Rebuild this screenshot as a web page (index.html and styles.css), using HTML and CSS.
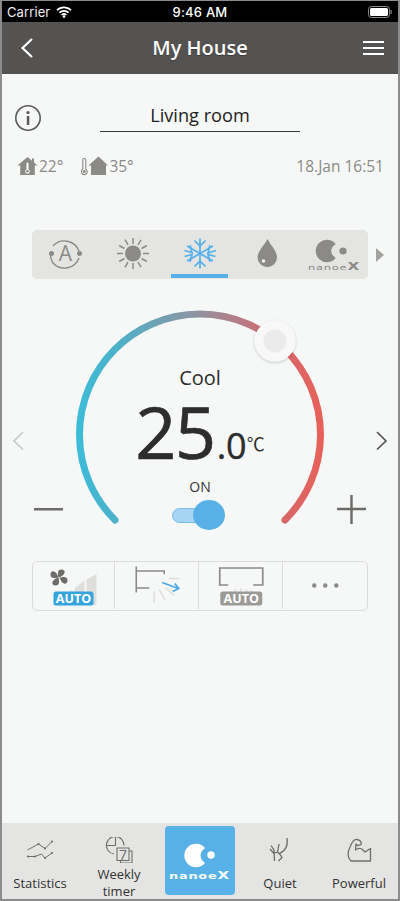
FILE: index.html
```html
<!DOCTYPE html>
<html lang="en">
<head>
<meta charset="utf-8">
<title>My House</title>
<link rel="stylesheet" href="styles.css">
</head>
<body>
<div class="frame">
  <div class="status">
    <div class="status-left">
      <span>Carrier</span>
      <svg class="wifi" viewBox="0 0 16 12" width="16" height="12"><path d="M1 4.2a10 10 0 0 1 14 0M3.4 6.7a6.6 6.6 0 0 1 9.2 0M5.7 9a3.3 3.3 0 0 1 4.6 0" fill="none" stroke="#fff" stroke-width="1.7"/><circle cx="8" cy="10.6" r="1.3" fill="#fff"/></svg>
    </div>
    <span class="clock">9:46 AM</span>
    <svg class="battery" viewBox="0 0 24 12" width="24" height="12"><rect x=".5" y=".5" width="21" height="11" rx="3" fill="none" stroke="#888"/><rect x="2" y="2" width="18" height="8" rx="1.5" fill="#fff"/><rect x="22.5" y="4" width="1.2" height="4" fill="#888"/></svg>
  </div>
  <header class="topbar">
    <svg class="back" viewBox="0 0 14 22" width="14" height="22"><path d="M12 2 2.5 11 12 20" fill="none" stroke="#fff" stroke-width="2.2"/></svg>
    <h1>My House</h1>
    <div class="burger"><i></i><i></i><i></i></div>
  </header>
  <main class="content">
    <div class="room-row">
      <svg class="info" viewBox="0 0 28 28" width="28" height="28"><circle cx="14" cy="14" r="12.2" fill="none" stroke="#5a5a58" stroke-width="1.6"/><circle cx="14" cy="8.6" r="1.6" fill="#5a5a58"/><rect x="12.8" y="12" width="2.5" height="9" fill="#5a5a58"/></svg>
      <div class="room-name">Living room</div>
    </div>
    <div class="meta">
      <div class="temps">
        <svg viewBox="0 0 21 20" width="21" height="20"><path d="M10.5 1 0.5 9.5h2.700V19h14.600V9.500h2.700L17 6.500V2.500h-2V4.800z" fill="#8b8a86"/><path d="M9.500 7.500a1 1 0 0 1 2 0v5.800a2.300 2.300 0 1 1-2 0z" fill="#fff"/><circle cx="10.500" cy="15.300" r="1.300" fill="#8b8a86"/></svg>
        <span class="t1">22°</span>
        <svg viewBox="0 0 27 20" width="27" height="20"><path d="M1.800 4a1.500 1.500 0 0 1 3 0v9.200a2.900 2.900 0 1 1-3 0z" fill="#f6f8f7" stroke="#8b8a86" stroke-width="1.100"/><circle cx="3.300" cy="15.600" r="1.500" fill="#8b8a86"/><path d="M17.500 0.500 7.500 9.500h2.500V19h15V9.500h2z" fill="#8b8a86"/></svg>
        <span>35°</span>
      </div>
      <span class="date">18.Jan 16:51</span>
    </div>
    <div class="modes-row">
      <nav class="modes">
        <svg viewBox="32 230 336 49" width="336" height="49">
          <g fill="none" stroke="#8b8a86" stroke-width="1.400">
            <path d="M53 246a15.500 15.500 0 0 1 26 5M79 258a15.500 15.500 0 0 1-26 5 16 16 0 0 1-2.500-9"/>
          </g>
          <circle cx="51.500" cy="253.500" r="2.500" fill="#8b8a86"/><circle cx="79.500" cy="253.500" r="2.500" fill="#8b8a86"/>
          <text x="65.500" y="261" text-anchor="middle" class="mode-a">A</text>
          <circle cx="133" cy="253.500" r="8" fill="#8b8a86"/>
          <g stroke="#8b8a86" stroke-width="1.500" stroke-linecap="butt">
            <path d="M133 238v6M133 263v6M117 253.500h6M143 253.500h6M125 239.700l3 5.200M138 262l3 5.200M119.200 245.500l5.200 3M141.600 258.500l5.200 3M125 267.300l3-5.200M138 245l3-5.200M119.200 261.500l5.200-3M141.600 248.500l5.200-3"/>
          </g>
          <g stroke="#55b1e8" stroke-width="1.700" fill="none">
            <path d="M200 238.500v30M187 246l26 15M187 261l26-15"/>
            <path d="M194.500 240.500l5.500 5.500 5.500-5.500M194.500 266.500l5.500-5.500 5.500 5.500M184.500 250.500l7.500 2-2-7.500M210 245l-2 8 8-2.500M184.500 256.500l7.500-2-2 7.500M215.500 256.500l-7.500-2 2 7.500"/>
          </g>
          <path d="M267.500 239c3 6 9.500 12 9.500 18.500a9.700 9.700 0 0 1-19.400 0c0-6.500 7-12.500 9.900-18.500z" fill="#8b8a86"/>
          <circle cx="263.500" cy="261" r="1.800" fill="#f0f0ee"/>
          <path transform="translate(327 251)" d="M8.700-7A11.200 11.200 0 1 0 8.700 7Q4.200 3.800 4.200 0 4.200-3.800 8.700-7z" fill="#8b8a86"/>
          <circle cx="343" cy="251" r="3.600" fill="#8b8a86"/>
          <text x="308" y="270" class="logo-text" fill="#8b8a86" textLength="52" lengthAdjust="spacingAndGlyphs">nanoe<tspan class="logo-x">X</tspan></text>
          <rect x="171" y="274" width="57" height="4" fill="#55b1e8"/>
        </svg>
      </nav>
      <svg class="more-modes" viewBox="0 0 8 14" width="8" height="14"><path d="M0 0l8 7-8 7z" fill="#a3a3a0"/></svg>
    </div>
    <section class="dial">
      <svg class="dial-art" viewBox="2 300 396 240" width="396" height="240">
        <defs>
          <linearGradient id="arcg" gradientUnits="userSpaceOnUse" x1="76" y1="0" x2="324" y2="0">
            <stop offset="0" stop-color="#3cbcd9"/><stop offset=".18" stop-color="#4fb0c8"/><stop offset=".5" stop-color="#93929f"/><stop offset=".8" stop-color="#d4686c"/><stop offset="1" stop-color="#e8615a"/>
          </linearGradient>
          <filter id="sh" x="-30%" y="-30%" width="160%" height="160%"><feDropShadow dx="0" dy="1" stdDeviation="1.500" flood-color="#000" flood-opacity=".22"/></filter>
        </defs>
        <path d="M115 520A120.500 120.500 0 1 1 285 520" fill="none" stroke="url(#arcg)" stroke-width="7" stroke-linecap="round"/>
        <circle cx="275" cy="341" r="20.500" fill="#f8f8f8" filter="url(#sh)"/>
        <circle cx="275" cy="341" r="11.500" fill="#ebebeb"/>
        <path d="M23 432 14 441 23 449.500" fill="none" stroke="#c6c8c6" stroke-width="1.600"/>
        <path d="M377 432 386 441 377 449.500" fill="none" stroke="#4f4f4d" stroke-width="1.600"/>
        <rect x="34" y="508" width="29" height="2.500" fill="#6b6b68"/>
        <path d="M337 509h29M351.500 495v29" stroke="#6b6b68" stroke-width="2.400"/>
      </svg>
      <div class="readout">
        <div class="mode-name">Cool</div>
        <div class="temp"><span class="t-int">25</span><span class="t-dec">.0</span><span class="t-unit">℃</span></div>
        <div class="power">ON</div>
        <div class="toggle"><span class="track"></span><span class="knob"></span></div>
      </div>
    </section>
    <div class="options">
      <div class="option opt-1">
        <svg viewBox="33.500 562.500 81 47">
          <path d="M52 605.500 62 598.500V605.500H52zM64 597 73 590.500V605.500H64zM75 589 85 581V605.500H75zM87 580 97 574.500V605.500H87z" fill="#dededc"/>
          <g fill="#6d6d6a"><path d="M59 578c-1-5-1-8 3-8 4 0 4 4 1 6-1 1-3 1.500-4 2zM60 578c5-1 8-1 8 3 0 4-4 4-6 1-1-1-1.500-3-2-4zM59 578c1 5 1 8-3 8-4 0-4-4-1-6 1-1 3-1.500 4-2zM59 578c-5 1-8 1-8-3 0-4 4-4 6-1 1 1 1.500 3 2 4z"/></g>
          <rect x="54" y="592" width="40" height="14" rx="2.500" fill="#35a4de"/>
          <text x="74" y="603.800" text-anchor="middle" class="badge">AUTO</text>
        </svg>
      </div>
      <div class="option opt-2">
        <svg viewBox="116 562.500 82.500 47">
          <path d="M137 567v26M137 571.500h28v3M137 588.500h13" fill="none" stroke="#8b8a86" stroke-width="1.600"/>
          <path d="M155 592 155 603M160 590 166 601M166 588 175 596M170 579h10" stroke="#dcdcda" stroke-width="1.500"/>
          <path d="M163 583 179 589M173.500 592 179.500 589 175.500 584" fill="none" stroke="#4aa9e6" stroke-width="1.700"/>
        </svg>
      </div>
      <div class="option opt-3">
        <svg viewBox="200 562.500 82.500 47">
          <path d="M229 585.500h-8.500V568.500h43V585.500h-9.500" fill="none" stroke="#8b8a86" stroke-width="1.700"/>
          <path d="M233 592 226 597M237 590 233 596M242 589 241 594M247 590 249 595M251 591 256 596" stroke="#dcdcda" stroke-width="1.400"/>
          <rect x="221" y="592" width="42" height="14" rx="2.500" fill="#9b9a96"/>
          <text x="242" y="603.800" text-anchor="middle" class="badge">AUTO</text>
        </svg>
      </div>
      <div class="option opt-4">
        <svg viewBox="284 562.500 82.500 47"><g fill="#8b8a86"><circle cx="315" cy="586" r="2.200"/><circle cx="326" cy="586" r="2.200"/><circle cx="337" cy="586" r="2.200"/></g></svg>
      </div>
    </div>
  </main>
  <footer class="tabs">
    <div class="tab">
      <svg viewBox="20 838 40 26" width="40" height="26">
        <g fill="none" stroke="#6d6d6a" stroke-width="1"><path d="M27.500 851 38.500 845 45 849.500 52 842.500"/><path d="M28 857.500H35L41.500 855 45 859 52 854"/></g>
        <g fill="#6d6d6a"><circle cx="38.500" cy="845" r="1.100"/><circle cx="45" cy="849.500" r="1.100"/><circle cx="52" cy="842.500" r="1.100"/><circle cx="28" cy="857.500" r="1.100"/><circle cx="35" cy="857.500" r="1.100"/><circle cx="45" cy="859" r="1.100"/><circle cx="52" cy="854" r="1.100"/></g>
      </svg>
      <span class="tab-label">Statistics</span>
    </div>
    <div class="tab">
      <svg viewBox="99 838 40 26" width="40" height="26">
        <g fill="none" stroke="#6d6d6a" stroke-width="1.100">
          <path d="M114 855A8.800 8.800 0 1 1 124 846.500"/>
          <path d="M115.500 838V846.500H107"/>
          <path d="M117 849H129V861.500H117zM129 852H132V864H120.500V861.500"/>
        </g>
        <text x="123" y="860.500" text-anchor="middle" class="cal">7</text>
      </svg>
      <span class="tab-label">Weekly<br>timer</span>
    </div>
    <div class="tab tab-active">
      <svg viewBox="165 827 70 69" width="70" height="69">
        <rect x="165" y="827" width="70" height="69" rx="4" fill="#58b1e6"/>
        <path transform="translate(196 856.500)" d="M9-7.500A11.700 11.700 0 1 0 9 7.500Q4.500 4 4.500 0 4.500-4 9-7.500z" fill="#fff"/>
        <circle cx="211" cy="856" r="3.700" fill="#fff"/>
        <text x="169" y="880" class="logo-text logo-big" fill="#fff" textLength="61" lengthAdjust="spacingAndGlyphs">nanoe<tspan class="logo-x">X</tspan></text>
      </svg>
    </div>
    <div class="tab">
      <svg viewBox="260 838 40 26" width="40" height="26">
        <path d="M271 846.500l3 4.500.5 11M279 845l-1.500 8-3 1M287 839c1 8-1 12-7.500 15.500l2.500 4-3.500 3.500M270 850l4 4.500M277.500 853l3.500 3.500" fill="none" stroke="#6d6d6a" stroke-width="1.300"/>
      </svg>
      <span class="tab-label">Quiet</span>
    </div>
    <div class="tab">
      <svg viewBox="339 838 40 26" width="40" height="26">
        <path d="M351 862C347 858 348 852 350 848 352 843 354 840 357 840.500 360 841 362 843 361 845.500L357.500 846.500 356 845 355.500 851C358 849 361 849 363 851L365 853 370.500 849.500V862z" fill="none" stroke="#6d6d6a" stroke-width="1.300" stroke-linejoin="round"/>
      </svg>
      <span class="tab-label">Powerful</span>
    </div>
  </footer>
</div>
</body>
</html>
```

FILE: styles.css
```css
* { box-sizing: border-box; }
html, body { margin: 0; padding: 0; }
body { width: 400px; height: 901px; overflow: hidden; font-family: "Open Sans", sans-serif; color: #333; background: #8b8b8b; }
svg { display: block; }

.frame { width: 400px; height: 901px; border: 2px solid #8c8c8c; border-top-width: 1px; display: flex; flex-direction: column; background: #f6f8f7; }

.status { height: 21px; flex: none; background: #000; color: #fff; display: grid; grid-template-columns: 1fr auto 1fr; align-items: center; padding: 0 6px 0 6px; font-family: Inter, sans-serif; font-size: 13px; }
.status-left { display: flex; align-items: center; gap: 6px; margin-left: -1px; }
.status-left span { color: #eee; font-weight: 400; letter-spacing: .1px; }
.clock { font-weight: 500; letter-spacing: .2px; }
.battery { justify-self: end; }

.topbar { height: 52px; flex: none; background: #545351; display: grid; grid-template-columns: 1fr auto 1fr; align-items: center; padding: 0 14px; color: #fff; }
.back { margin-left: 4px; }
.topbar h1 { margin: 0; font-size: 20px; line-height: 26px; font-weight: 600; text-shadow: 0 1px 1px rgba(0,0,0,.3); }
.burger { width: 21px; justify-self: end; display: flex; flex-direction: column; gap: 3.5px; }
.burger i { display: block; height: 2.500px; background: #fff; }

.content { flex: 1; display: flex; flex-direction: column; min-height: 0; }

.room-row { margin-top: 28px; display: grid; grid-template-columns: 98px 200px 98px; align-items: center; height: 29px; }
.info { margin-left: 12px; margin-top: 2px; }
.room-name { grid-column: 2; height: 29px; line-height: 25px; text-align: center; font-size: 18.200px; border-bottom: 1.500px solid #3a3a38; color: #222; }

.meta { margin-top: 22px; height: 26px; display: flex; align-items: center; justify-content: space-between; padding: 0 14px 0 15px; color: #8b8a86; font-size: 15.500px; }
.temps { display: flex; align-items: center; gap: 0; }
.temps span { margin-left: 1px; }
.temps .t1 { margin-right: 18px; }

.modes-row { margin-top: 51px; padding-left: 30px; display: flex; align-items: center; gap: 8px; }
.modes { width: 336px; height: 49px; background: #e4e4e2; border-radius: 5px; }
.mode-a { font-family: "Open Sans", sans-serif; font-size: 21px; fill: #8b8a86; }
.logo-text { font-family: "DejaVu Sans", sans-serif; font-size: 7.500px; font-weight: 400; letter-spacing: .5px; }
.logo-x { font-weight: 700; font-size: 10px; }
.logo-big { font-size: 8.500px; font-weight: 700; }

.dial { margin-top: 21px; height: 240px; position: relative; }
.dial-art { position: absolute; left: 0; top: 0; }
.readout { position: relative; padding-top: 64px; display: flex; flex-direction: column; align-items: center; }
.mode-name { font-size: 20px; line-height: 27px; color: #2c2c2c; }
.temp { height: 80px; line-height: 80px; white-space: nowrap; color: #2d2d2d; }
.t-int { font-size: 72px; letter-spacing: -1.500px; -webkit-text-stroke: .7px #2d2d2d; }
.t-dec { font-size: 36px; margin-left: 2px; -webkit-text-stroke: .4px #2d2d2d; }
.t-unit { font-size: 18px; font-family: "Noto Sans CJK JP", sans-serif; vertical-align: 8px; }
.power { margin-top: 6px; font-size: 14px; line-height: 20px; color: #333; }
.toggle { margin-top: 3px; width: 56px; display: flex; align-items: center; }
.track { width: 28px; height: 15px; border-radius: 7.500px 0 0 7.500px; background: #a6d5f3; border: 1px solid #75bcea; flex: none; }
.knob { width: 32px; height: 30px; margin-left: -7px; border-radius: 50%; background: #58b0e6; flex: none; }

.options { margin: 21px 0 0 30px; width: 336px; height: 50px; display: flex; border: 1.500px solid #dcdcda; border-radius: 5px; overflow: hidden; }
.option { flex: none; height: 47px; }
.option svg { width: 100%; height: 100%; }
.opt-1 { width: 81px; }
.opt-2, .opt-3, .opt-4 { width: 84px; border-left: 1.500px solid #dcdcda; }
.cal { font-family: "Open Sans", sans-serif; font-size: 14px; fill: #6d6d6a; }
.badge { font-family: "Open Sans", sans-serif; font-size: 12.500px; font-weight: 700; fill: #fff; }

.tabs { height: 76px; flex: none; background: #e4e4e2; display: grid; grid-template-columns: 76px 82px 80px 80px 78px; }
.tab { display: flex; flex-direction: column; align-items: center; padding-top: 14px; }
.tab-label { height: 32px; margin-top: 4px; display: flex; align-items: center; text-align: center; font-size: 13px; line-height: 17px; color: #333; font-weight: 500; white-space: nowrap; }
.tab-active { padding-top: 3px; }
```
